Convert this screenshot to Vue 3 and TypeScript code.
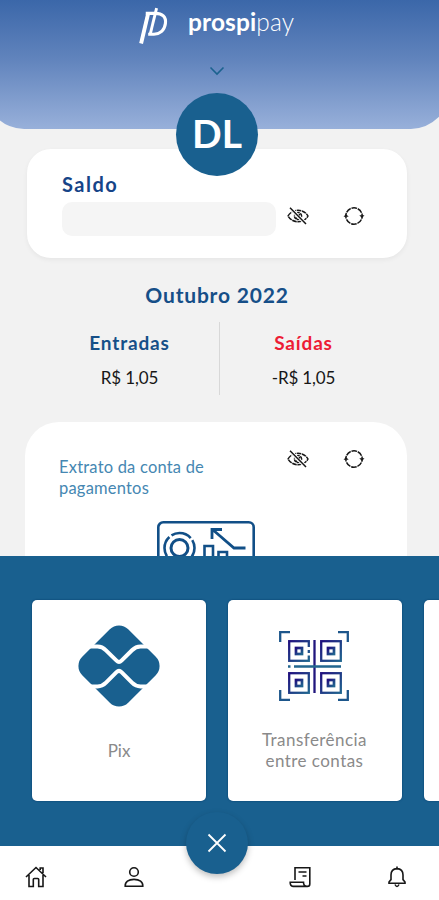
<script setup lang="ts">
interface Summary {
  label: string
  value: string
  kind: 'in' | 'out'
}

const summaries: Summary[] = [
  { label: 'Entradas', value: 'R$ 1,05', kind: 'in' },
  { label: 'Saídas', value: '-R$ 1,05', kind: 'out' },
]

const qrBlocks = [
  { x: 9, y: 9 },
  { x: 41, y: 9 },
  { x: 9, y: 41 },
  { x: 41, y: 41 },
]
</script>

<template>
  <div class="screen">
    <svg class="symbols" aria-hidden="true">
      <symbol id="eye-off" viewBox="0 0 22 18">
        <g fill="none" stroke="#171717" stroke-width="1.5">
          <path d="M1 9C5.2 1.4 16.8 1.4 21 9C16.8 16.6 5.2 16.6 1 9Z" stroke-dasharray="4.6 .7" />
          <circle cx="11" cy="9" r="3.6" stroke-dasharray="3 .8" />
          <path d="M3 .8L19 17" stroke="#fff" stroke-width="3.6" />
          <path d="M3 .8L19 17M8.5 10.5L10 12M12 7L13.2 8.2" />
        </g>
      </symbol>
      <symbol id="refresh" viewBox="0 0 22 20">
        <circle cx="11" cy="10" r="8.2" fill="none" stroke="#171717" stroke-width="1.5" stroke-dasharray="5.6 .84" stroke-dashoffset="2.8" />
        <path d="M.5 10.8L3 8L5.7 10.8ZM16.3 9.2L19 12L21.5 9.2Z" fill="#171717" />
      </symbol>
    </svg>

    <header class="hero">
      <div class="brand">
        <svg class="brand-mark" viewBox="0 0 32 40" fill="none" stroke="#fff">
          <path d="M3.2 37.5L10.6 6" stroke-width="4" />
          <path d="M8 6.5H18C25 6.5 29.3 10 28.3 17C27.3 24.5 22 28 16.5 28H10.5" stroke-width="3.2" />
          <path d="M19.2 1L12.6 28" stroke-width="3" />
        </svg>
        <span class="brand-name"><b>prospi</b><span>pay</span></span>
      </div>
      <svg class="chevron" viewBox="0 0 16 10"><path d="M1.5 1.5L8 8L14.5 1.5" fill="none" stroke="#1b628e" stroke-width="1.6" /></svg>
      <div class="avatar">DL</div>
    </header>

    <section class="balance">
      <h2>Saldo</h2>
      <div class="balance-row">
        <div class="amount"></div>
        <svg class="eye"><use href="#eye-off" /></svg>
        <svg class="reload"><use href="#refresh" /></svg>
      </div>
    </section>

    <section class="month">
      <h2>Outubro 2022</h2>
      <div class="totals">
        <div v-for="item in summaries" :key="item.kind" class="total" :class="item.kind">
          <strong>{{ item.label }}</strong>
          <span>{{ item.value }}</span>
        </div>
      </div>
    </section>

    <section class="statement">
      <div class="statement-head">
        <p>Extrato da conta de<br />pagamentos</p>
        <svg class="eye"><use href="#eye-off" /></svg>
        <svg class="reload"><use href="#refresh" /></svg>
      </div>
      <svg class="chart" viewBox="0 0 98 60" fill="none" stroke="#114f87" stroke-width="2.6">
        <rect x="1.3" y="1.3" width="95.4" height="70" rx="5" />
        <circle cx="22.5" cy="27" r="15" stroke-dasharray="21 2.6" stroke-dashoffset="9" />
        <circle cx="22.5" cy="27" r="8.5" stroke-width="3" />
        <path d="M47.5 50V25H56V50M61.5 50V31H70V50" />
        <path d="M88.5 27H77L55.5 8.5M55 18V8.5H65" stroke-width="2.8" />
      </svg>
    </section>

    <section class="actions">
      <article class="tile">
        <svg class="pix" viewBox="0 0 82 82">
          <rect x="8.5" y="8.5" width="65" height="65" rx="13" transform="rotate(45 41 41)" fill="#19608f" />
          <g fill="none" stroke="#fff" stroke-width="4">
            <path d="M11 21.5H19.5C23 21.5 25.5 22.8 28 25.3L38.5 35.6Q41 38.1 43.5 35.6L54 25.3C56.5 22.8 59 21.5 62.5 21.5H71" />
            <path d="M11 61.5H19.5C23 61.5 25.5 60.2 28 57.7L38.5 47.2Q41 44.7 43.5 47.2L54 57.7C56.5 60.2 59 61.5 62.5 61.5H71" />
          </g>
        </svg>
        <p>Pix</p>
      </article>
      <article class="tile wide-text">
        <svg class="qr" viewBox="0 0 70 70" fill="none" stroke-width="2.3">
          <defs>
            <linearGradient id="ink" x1="0" x2="1" y1="0" y2="1">
              <stop offset="0" stop-color="#20107e" />
              <stop offset="1" stop-color="#20658f" />
            </linearGradient>
          </defs>
          <path d="M1.2 11V1.2H11M59 1.2H68.8V11M68.8 59V68.8H59M11 68.8H1.2V59" stroke="#1d568b" />
          <g v-for="block in qrBlocks" :key="`${block.x}-${block.y}`" stroke="url(#ink)">
            <rect :x="block.x + 1.2" :y="block.y + 1.2" width="19.6" height="19.6" />
            <rect :x="block.x + 8" :y="block.y + 8" width="6" height="6" stroke-width="2.7" />
          </g>
          <path d="M30 16V19M30 22V24.5" stroke="#fff" stroke-width="4" />
          <path d="M35.5 9V62" stroke="#21167d" />
          <path d="M9 35.5H11.5M15 35.5H62" stroke="#22668f" />
        </svg>
        <p>Transferência<br />entre contas</p>
      </article>
      <article class="tile"></article>
    </section>

    <nav class="tabs">
      <svg class="tab" viewBox="0 0 22 22">
        <path d="M1 11L11 1.5L21 11M4 9V20.5H8.3V13.5Q8.3 12.5 9.3 12.5H12.7Q13.7 12.5 13.7 13.5V20.5H18V9M15.2 4V2H18V7" />
      </svg>
      <svg class="tab" viewBox="0 0 22 22">
        <circle cx="11" cy="6" r="4.3" />
        <path d="M2.2 20.3C1.9 16 5.5 13.4 11 13.4S20.1 16 19.8 20.3Z" />
      </svg>
      <button class="close" aria-label="Fechar">
        <svg viewBox="0 0 20 20"><path d="M1.5 1.5L18.5 18.5M18.5 1.5L1.5 18.5" fill="none" stroke="#fff" stroke-width="1.8" /></svg>
      </button>
      <svg class="tab after-close" viewBox="0 0 22 22">
        <path d="M6 14V1.8H20.8V18Q20.8 20.4 18.4 20.4H4Q1 20.2 1.2 16.3H14.5Q14.5 20.4 18 20.4M9.5 6H17.5M13.5 10H17.5" />
      </svg>
      <svg class="tab" viewBox="0 0 22 22">
        <path d="M3 17.2V16L5 13.6V9Q5 3 11 2.6Q17 3 17 9V13.6L19 16V17.2ZM11 .5V3M9 18.5Q11 22.4 13 18.5" />
      </svg>
    </nav>
  </div>
</template>

<style>
body {
  margin: 0;
  background: #f2f2f2;
}
</style>

<style scoped>
.screen {
  display: flex;
  flex-direction: column;
  width: 439px;
  height: 900px;
  overflow: hidden;
  background: #f2f2f2;
  font-family: Lato, sans-serif;
}
.symbols {
  position: absolute;
  width: 0;
  height: 0;
}
h2,
p {
  margin: 0;
}
.hero {
  position: relative;
  z-index: 1;
  flex: none;
  display: flex;
  flex-direction: column;
  align-items: center;
  box-sizing: border-box;
  width: 463px;
  height: 129px;
  margin-left: -14px;
  padding: 7px 0 0;
  border-radius: 0 0 38px 38px;
  background: linear-gradient(#3b67a9, #6083bc 45%, #98b0da);
}
.brand {
  display: flex;
  gap: 19px;
  height: 39px;
  margin-left: -2px;
}
.brand-mark {
  width: 31px;
  height: 39px;
}
.brand-name {
  display: flex;
  width: 107px;
  color: #fff;
  font-size: 24.5px;
  line-height: 30px;
  letter-spacing: 0.1px;
}
.brand-name span {
  font-weight: 300;
}
.chevron {
  width: 16px;
  height: 10px;
  margin: 20px 2px 0 0;
}
.avatar {
  position: absolute;
  top: 93px;
  left: 190px;
  width: 82px;
  height: 83px;
  border-radius: 50%;
  background: #19608f;
  color: #fff;
  font-size: 39px;
  font-weight: 700;
  line-height: 80px;
  text-align: center;
}
.balance {
  flex: none;
  box-sizing: border-box;
  width: 380px;
  height: 109px;
  margin: 20px 0 0 27px;
  padding: 22px 35px 0;
  border-radius: 24px;
  background: #fff;
  box-shadow: 0 2px 5px #0000000d;
}
.balance h2 {
  color: #164488;
  font-size: 20px;
  line-height: 26px;
  letter-spacing: 1.5px;
}
.balance-row {
  display: flex;
  align-items: center;
  margin-top: 5px;
}
.amount {
  width: 214px;
  height: 34px;
  border-radius: 10px;
  background: #f5f5f5;
}
.eye {
  width: 22px;
  height: 18px;
  margin: -7px 0 0 11px;
}
.reload {
  width: 22px;
  height: 20px;
  margin: -7px 0 0 34px;
}
.month {
  flex: none;
  height: 164px;
  box-sizing: border-box;
  padding-top: 24px;
}
.month h2 {
  width: 434px;
  color: #164f88;
  font-size: 21px;
  line-height: 26px;
  letter-spacing: 0.8px;
  text-align: center;
}
.totals {
  display: flex;
  margin: 14px 0 0 40px;
}
.total {
  display: flex;
  flex-direction: column;
  gap: 11px;
  width: 179px;
  height: 73px;
  box-sizing: border-box;
  padding-top: 9px;
  text-align: center;
  color: #171717;
  font-size: 17px;
  line-height: 24px;
  letter-spacing: -0.15px;
}
.total.out {
  width: 168px;
  border-left: 1px solid #d8d8d8;
}
.total strong {
  color: #164f88;
  font-size: 19px;
  letter-spacing: 0.85px;
}
.total.out strong {
  color: #ed1c35;
}
.statement {
  flex: 1;
  min-height: 0;
  overflow: hidden;
  width: 382px;
  box-sizing: border-box;
  margin-left: 25px;
  padding: 35px 34px 0;
  border-radius: 34px 34px 0 0;
  background: #fff;
}
.statement-head {
  display: flex;
}
.statement-head p {
  width: 217px;
  color: #4587b2;
  font-size: 16.5px;
  line-height: 20.5px;
  letter-spacing: 0.2px;
}
.statement-head .eye {
  margin: -7px 0 0 11px;
}
.statement-head .reload {
  margin-top: -8px;
}
.chart {
  display: block;
  width: 98px;
  height: 60px;
  margin: 23px 0 0 98px;
}
.actions {
  flex: none;
  display: flex;
  gap: 22px;
  box-sizing: border-box;
  height: 290px;
  padding: 44px 0 0 32px;
  background: #19608f;
}
.tile {
  flex: none;
  display: flex;
  flex-direction: column;
  align-items: center;
  width: 174px;
  height: 201px;
  border-radius: 5px;
  background: #fff;
  box-shadow: 0 0 2px #003967;
  color: #8a8a8a;
  font-size: 17px;
  line-height: 21px;
  text-align: center;
}
.wide-text {
  letter-spacing: 0.45px;
}
.pix {
  width: 82px;
  height: 82px;
  margin: 25px 0 33px;
}
.qr {
  width: 70px;
  height: 70px;
  margin: 31px 2px 28px 0;
}
.wide-text p {
  margin-right: 1px;
}
.tabs {
  position: relative;
  z-index: 1;
  flex: none;
  display: grid;
  grid-template-columns: 72px 123px 44px 122px 72px;
  justify-items: center;
  height: 54px;
  padding-top: 1px;
  box-sizing: border-box;
  background: #fff;
}
.tab {
  width: 22px;
  height: 22px;
  margin-top: 19px;
  fill: none;
  stroke: #171717;
  stroke-width: 1.6;
}
.after-close {
  grid-column: 4;
}
.close {
  position: absolute;
  top: -34px;
  left: 186px;
  display: grid;
  place-items: center;
  width: 62px;
  height: 62px;
  padding: 0;
  border: 0;
  border-radius: 50%;
  background: #19608f;
  box-shadow: 0 3px 6px #00000040;
}
.close svg {
  width: 20px;
  height: 20px;
}
</style>
